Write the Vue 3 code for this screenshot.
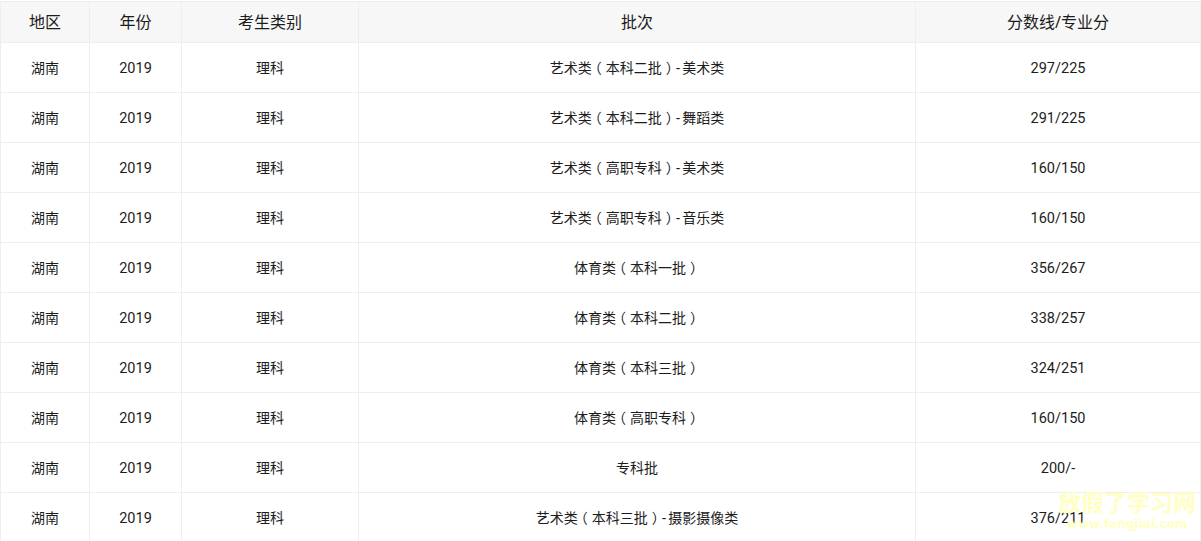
<script setup>
const heads = ['地区', '年份', '考生类别', '批次', '分数线/专业分']
const rows = [
  { pre: '艺术类', mid: '本科二批', post: '美术类', score: '297/225' },
  { pre: '艺术类', mid: '本科二批', post: '舞蹈类', score: '291/225' },
  { pre: '艺术类', mid: '高职专科', post: '美术类', score: '160/150' },
  { pre: '艺术类', mid: '高职专科', post: '音乐类', score: '160/150' },
  { pre: '体育类', mid: '本科一批', post: '', score: '356/267' },
  { pre: '体育类', mid: '本科二批', post: '', score: '338/257' },
  { pre: '体育类', mid: '本科三批', post: '', score: '324/251' },
  { pre: '体育类', mid: '高职专科', post: '', score: '160/150' },
  { pre: '专科批', mid: '', post: '', score: '200/-' },
  { pre: '艺术类', mid: '本科三批', post: '摄影摄像类', score: '376/211' },
]
</script>

<template>
  <div class="page">
    <table class="scores">
      <colgroup>
        <col class="c1" /><col class="c2" /><col class="c3" /><col class="c4" /><col class="c5" />
      </colgroup>
      <thead>
        <tr><th v-for="h in heads" :key="h">{{ h }}</th></tr>
      </thead>
      <tbody>
        <tr v-for="(r, i) in rows" :key="i">
          <td class="cjk">湖南</td>
          <td class="num">2019</td>
          <td class="cjk">理科</td>
          <td class="cjk">{{ r.pre }}<template v-if="r.mid"><span class="open">（</span>{{ r.mid }}<span class="close">）</span></template><template v-if="r.post"><span class="dash">-</span>{{ r.post }}</template></td>
          <td class="num">{{ r.score }}</td>
        </tr>
      </tbody>
    </table>
    <div class="mark">
      <div class="mark-cn">放假了学习网</div>
      <div class="mark-en">www.fangjial.com</div>
    </div>
  </div>
</template>

<style>
html, body { margin: 0; background: #fff; overflow: hidden; }
</style>

<style scoped>
.page {
  position: relative;
  width: 1201px;
  height: 541px;
  overflow: hidden;
  padding-top: 1px;
  box-sizing: border-box;
  font-family: "Noto Sans", "Noto Sans CJK SC", sans-serif;
  color: #1c1c1c;
}
.scores {
  width: 1200px;
  border-collapse: collapse;
  table-layout: fixed;
}
.c1 { width: 89px; }
.c2 { width: 92px; }
.c3 { width: 177px; }
.c4 { width: 557px; }
.c5 { width: 285px; }
th, td {
  border: 1px solid #eee;
  text-align: center;
  padding: 0;
  box-sizing: border-box;
}
th {
  height: 41px;
  background: #f7f7f7;
  font-size: 16px;
  font-weight: 400;
  padding-bottom: 2px;
}
td { height: 50px; }
.cjk { font-size: 14px; padding-bottom: 2px; }
.num { font-family: Roboto, sans-serif; font-size: 14.5px; padding-top: 2px; }
.open { margin-left: -4px; padding-right: 4px; }
.close { padding-left: 4px; margin-right: -4px; }
.dash { letter-spacing: 2px; }
.mark {
  position: absolute;
  left: 1058px;
  top: 489px;
  color: #ffffc4;
  font-weight: 700;
  text-align: center;
  width: 138px;
}
.mark-cn { font-size: 23px; line-height: 26px; }
.mark-en { font-family: "DejaVu Sans", sans-serif; font-size: 12px; line-height: 16px; margin-top: 1px; white-space: nowrap; }
</style>
